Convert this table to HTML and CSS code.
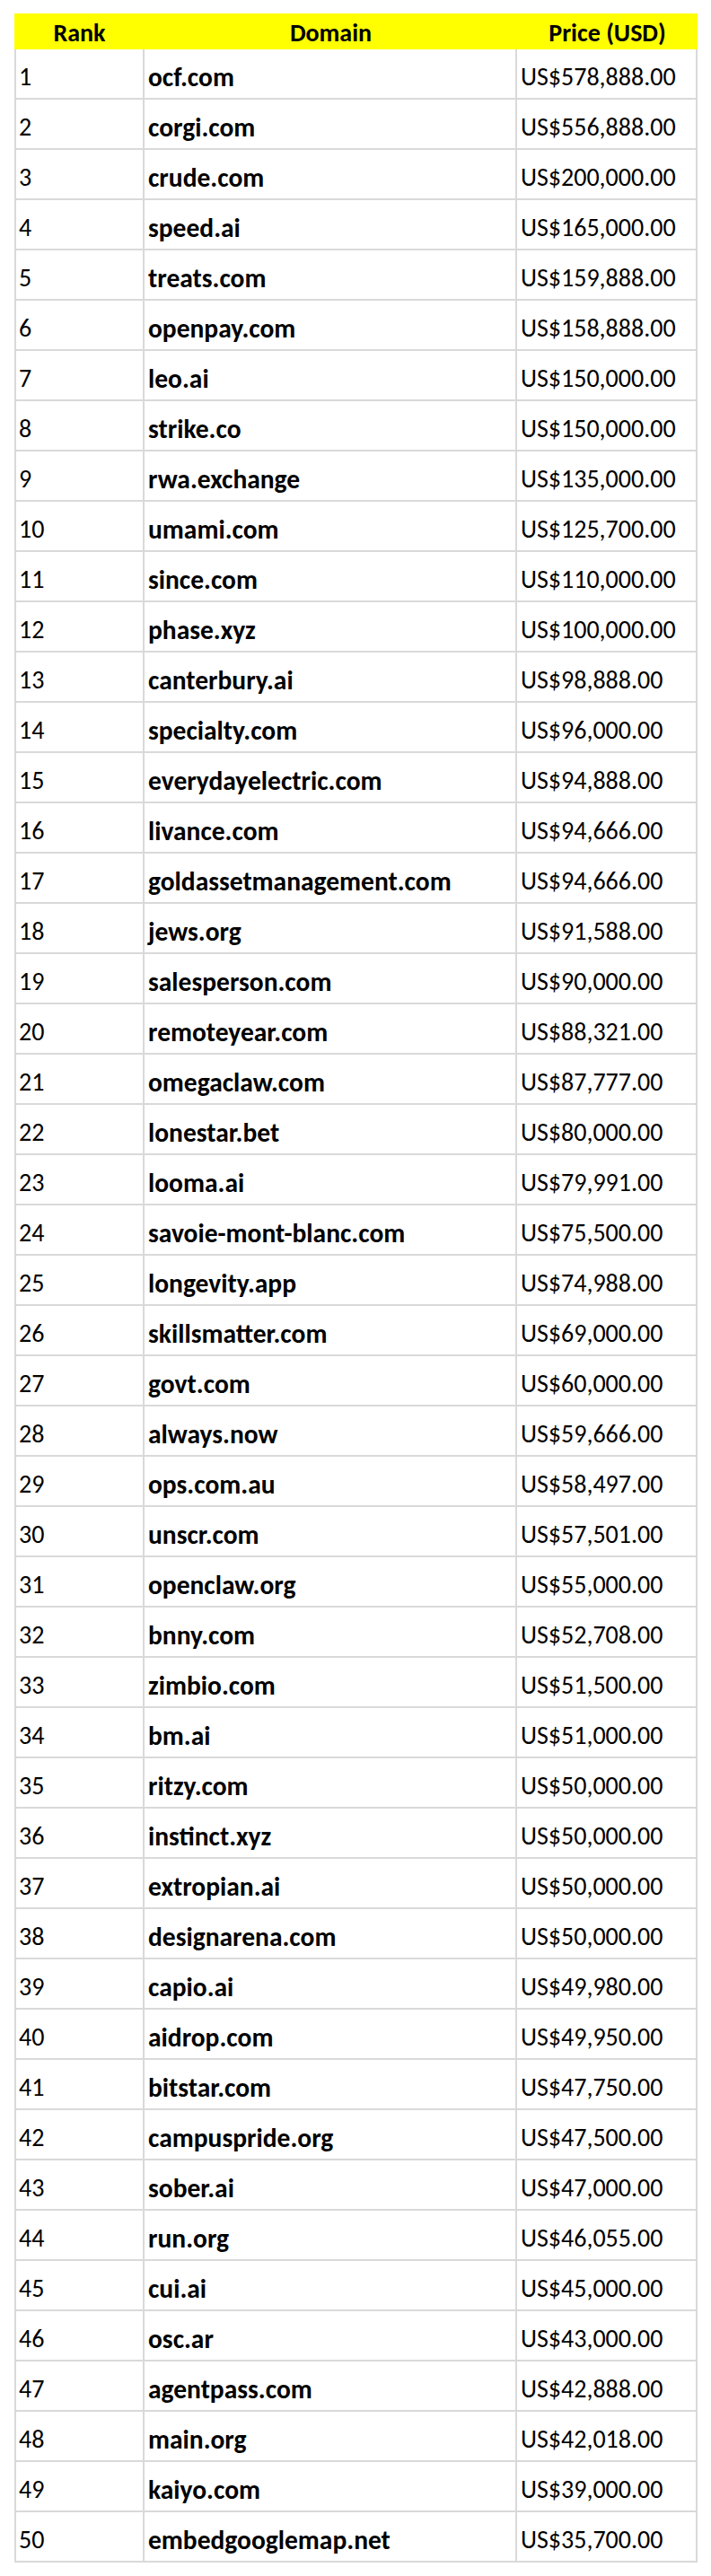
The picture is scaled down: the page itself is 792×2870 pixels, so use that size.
FILE: index.html
```html
<!DOCTYPE html>
<html>
<head>
<meta charset="utf-8">
<link rel="stylesheet" href="styles.css">
</head>
<body>
<table class="sheet">
<colgroup><col class="c-rank"><col class="c-domain"><col class="c-price"></colgroup>
<thead>
<tr><th>Rank</th><th>Domain</th><th>Price (USD)</th></tr>
</thead>
<tbody>
<tr><td>1</td><td class="dom">ocf.com</td><td>US$578,888.00</td></tr>
<tr><td>2</td><td class="dom">corgi.com</td><td>US$556,888.00</td></tr>
<tr><td>3</td><td class="dom">crude.com</td><td>US$200,000.00</td></tr>
<tr><td>4</td><td class="dom">speed.ai</td><td>US$165,000.00</td></tr>
<tr><td>5</td><td class="dom">treats.com</td><td>US$159,888.00</td></tr>
<tr><td>6</td><td class="dom">openpay.com</td><td>US$158,888.00</td></tr>
<tr><td>7</td><td class="dom">leo.ai</td><td>US$150,000.00</td></tr>
<tr><td>8</td><td class="dom">strike.co</td><td>US$150,000.00</td></tr>
<tr><td>9</td><td class="dom">rwa.exchange</td><td>US$135,000.00</td></tr>
<tr><td>10</td><td class="dom">umami.com</td><td>US$125,700.00</td></tr>
<tr><td>11</td><td class="dom">since.com</td><td>US$110,000.00</td></tr>
<tr><td>12</td><td class="dom">phase.xyz</td><td>US$100,000.00</td></tr>
<tr><td>13</td><td class="dom">canterbury.ai</td><td>US$98,888.00</td></tr>
<tr><td>14</td><td class="dom">specialty.com</td><td>US$96,000.00</td></tr>
<tr><td>15</td><td class="dom">everydayelectric.com</td><td>US$94,888.00</td></tr>
<tr><td>16</td><td class="dom">livance.com</td><td>US$94,666.00</td></tr>
<tr><td>17</td><td class="dom">goldassetmanagement.com</td><td>US$94,666.00</td></tr>
<tr><td>18</td><td class="dom">jews.org</td><td>US$91,588.00</td></tr>
<tr><td>19</td><td class="dom">salesperson.com</td><td>US$90,000.00</td></tr>
<tr><td>20</td><td class="dom">remoteyear.com</td><td>US$88,321.00</td></tr>
<tr><td>21</td><td class="dom">omegaclaw.com</td><td>US$87,777.00</td></tr>
<tr><td>22</td><td class="dom">lonestar.bet</td><td>US$80,000.00</td></tr>
<tr><td>23</td><td class="dom">looma.ai</td><td>US$79,991.00</td></tr>
<tr><td>24</td><td class="dom">savoie-mont-blanc.com</td><td>US$75,500.00</td></tr>
<tr><td>25</td><td class="dom">longevity.app</td><td>US$74,988.00</td></tr>
<tr><td>26</td><td class="dom">skillsmatter.com</td><td>US$69,000.00</td></tr>
<tr><td>27</td><td class="dom">govt.com</td><td>US$60,000.00</td></tr>
<tr><td>28</td><td class="dom">always.now</td><td>US$59,666.00</td></tr>
<tr><td>29</td><td class="dom">ops.com.au</td><td>US$58,497.00</td></tr>
<tr><td>30</td><td class="dom">unscr.com</td><td>US$57,501.00</td></tr>
<tr><td>31</td><td class="dom">openclaw.org</td><td>US$55,000.00</td></tr>
<tr><td>32</td><td class="dom">bnny.com</td><td>US$52,708.00</td></tr>
<tr><td>33</td><td class="dom">zimbio.com</td><td>US$51,500.00</td></tr>
<tr><td>34</td><td class="dom">bm.ai</td><td>US$51,000.00</td></tr>
<tr><td>35</td><td class="dom">ritzy.com</td><td>US$50,000.00</td></tr>
<tr><td>36</td><td class="dom">instinct.xyz</td><td>US$50,000.00</td></tr>
<tr><td>37</td><td class="dom">extropian.ai</td><td>US$50,000.00</td></tr>
<tr><td>38</td><td class="dom">designarena.com</td><td>US$50,000.00</td></tr>
<tr><td>39</td><td class="dom">capio.ai</td><td>US$49,980.00</td></tr>
<tr><td>40</td><td class="dom">aidrop.com</td><td>US$49,950.00</td></tr>
<tr><td>41</td><td class="dom">bitstar.com</td><td>US$47,750.00</td></tr>
<tr><td>42</td><td class="dom">campuspride.org</td><td>US$47,500.00</td></tr>
<tr><td>43</td><td class="dom">sober.ai</td><td>US$47,000.00</td></tr>
<tr><td>44</td><td class="dom">run.org</td><td>US$46,055.00</td></tr>
<tr><td>45</td><td class="dom">cui.ai</td><td>US$45,000.00</td></tr>
<tr><td>46</td><td class="dom">osc.ar</td><td>US$43,000.00</td></tr>
<tr><td>47</td><td class="dom">agentpass.com</td><td>US$42,888.00</td></tr>
<tr><td>48</td><td class="dom">main.org</td><td>US$42,018.00</td></tr>
<tr><td>49</td><td class="dom">kaiyo.com</td><td>US$39,000.00</td></tr>
<tr><td>50</td><td class="dom">embedgooglemap.net</td><td>US$35,700.00</td></tr>
</tbody>
</table>
</body>
</html>
```
FILE: styles.css
```css
html, body {
  margin: 0;
  padding: 0;
  background: #ffffff;
}
body {
  padding: 15px 0 0 16px;
  font-family: Carlito, "Open Sans", "Liberation Sans", sans-serif;
  color: #000000;
}
.sheet {
  border-collapse: separate;
  border-spacing: 0;
  table-layout: fixed;
  width: 761px;
  font-size: 28px;
}
.c-rank { width: 145px; }
.c-domain { width: 415px; }
.c-price { width: 201px; }
.sheet th {
  background: #ffff00;
  font-weight: 700;
  text-align: center;
  height: 37px;
  padding: 3px 0 0 0;
  line-height: 37px;
  box-sizing: content-box;
}
.sheet td {
  text-align: left;
  white-space: nowrap;
  overflow: hidden;
  height: 34px;
  padding: 14px 0 6px 3px;
  line-height: 34px;
  border-right: 2px solid #d9d9d9;
  border-bottom: 2px solid #d9d9d9;
  box-sizing: content-box;
  vertical-align: top;
}
.sheet td:first-child {
  border-left: 2px solid #d9d9d9;
}
.sheet td.dom {
  font-weight: 700;
  font-size: 29.5px;
  padding-left: 4px;
}
.sheet td:last-child {
  padding-left: 4px;
}
```
